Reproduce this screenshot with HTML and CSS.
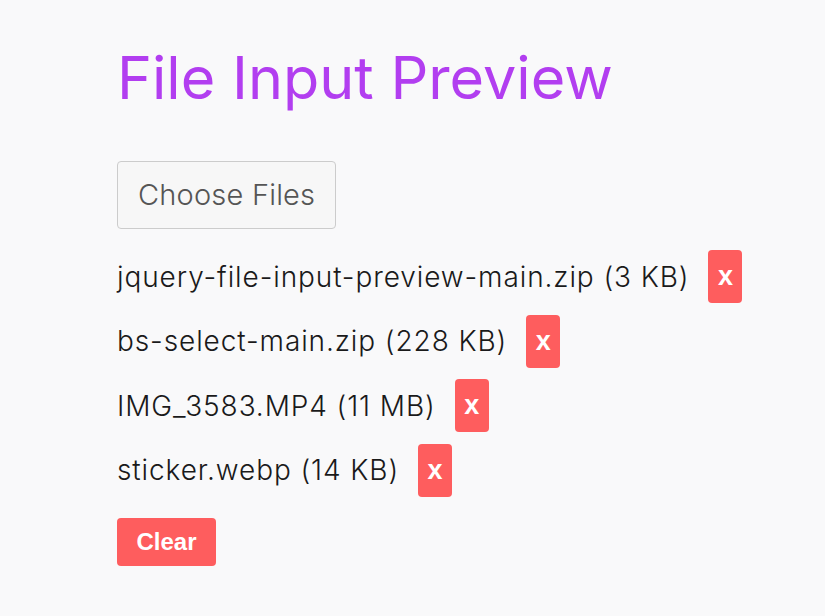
FILE: index.html
```html
<!DOCTYPE html>
<html lang="en">
<head>
    <meta charset="UTF-8">
    <meta name="viewport" content="width=device-width, initial-scale=1.0">
    <title>File Input Preview</title>
    <link rel="stylesheet" href="styles.css">
</head>
<body>

    <div class="container">
        <h1 class="title">File Input Preview</h1>

        <label class="file-btn">Choose Files</label>

        <ul class="file-list">
            <li class="file-item">
                <span class="file-name">jquery-file-input-preview-main.zip (3 KB)</span>
                <button class="btn-remove">x</button>
            </li>
            <li class="file-item">
                <span class="file-name">bs-select-main.zip (228 KB)</span>
                <button class="btn-remove">x</button>
            </li>
            <li class="file-item">
                <span class="file-name">IMG_3583.MP4 (11 MB)</span>
                <button class="btn-remove">x</button>
            </li>
            <li class="file-item">
                <span class="file-name">sticker.webp (14 KB)</span>
                <button class="btn-remove">x</button>
            </li>
        </ul>

        <button class="btn-clear">Clear</button>
    </div>

</body>
</html>
```

FILE: styles.css
```css
body {
    margin: 0;
    font-family: Inter, "Noto Sans", sans-serif;
    background-color: #f9f9fa;
    color: #1a1a1a;
}

.container {
    padding: 30px 40px 30px 117px;
}

.title {
    margin: 0 0 35px;
    font-size: 59.3px;
    font-weight: 400;
    color: #b23ef0;
    line-height: 96px;
}

.file-btn {
    display: inline-block;
    box-sizing: border-box;
    height: 68px;
    padding: 0 20px;
    line-height: 66px;
    font-size: 29px;
    font-weight: 300;
    letter-spacing: 0.2px;
    color: #555;
    background-color: #f7f7f7;
    border: 1px solid #ccc;
    border-radius: 4px;
}

.file-list {
    list-style: none;
    margin: 21px 0 0;
    padding: 0;
}

.file-item {
    display: flex;
    align-items: center;
    gap: 19px;
    margin-bottom: 11.5px;
}

.file-name {
    font-size: 28px;
    font-weight: 300;
    letter-spacing: 0.9px;
    white-space: nowrap;
}

.btn-remove {
    height: 53px;
    width: 34px;
    padding: 0;
    font-family: "Liberation Sans", Arial, sans-serif;
    font-size: 27px;
    font-weight: bold;
    color: white;
    background-color: #fe5d5e;
    border: none;
    border-radius: 4px;
}

.btn-clear {
    margin-top: 10px;
    width: 99px;
    height: 48px;
    padding: 0;
    font-family: "Liberation Sans", Arial, sans-serif;
    font-size: 24px;
    font-weight: bold;
    color: white;
    background-color: #fe5d5e;
    border: none;
    border-radius: 4px;
}
```
